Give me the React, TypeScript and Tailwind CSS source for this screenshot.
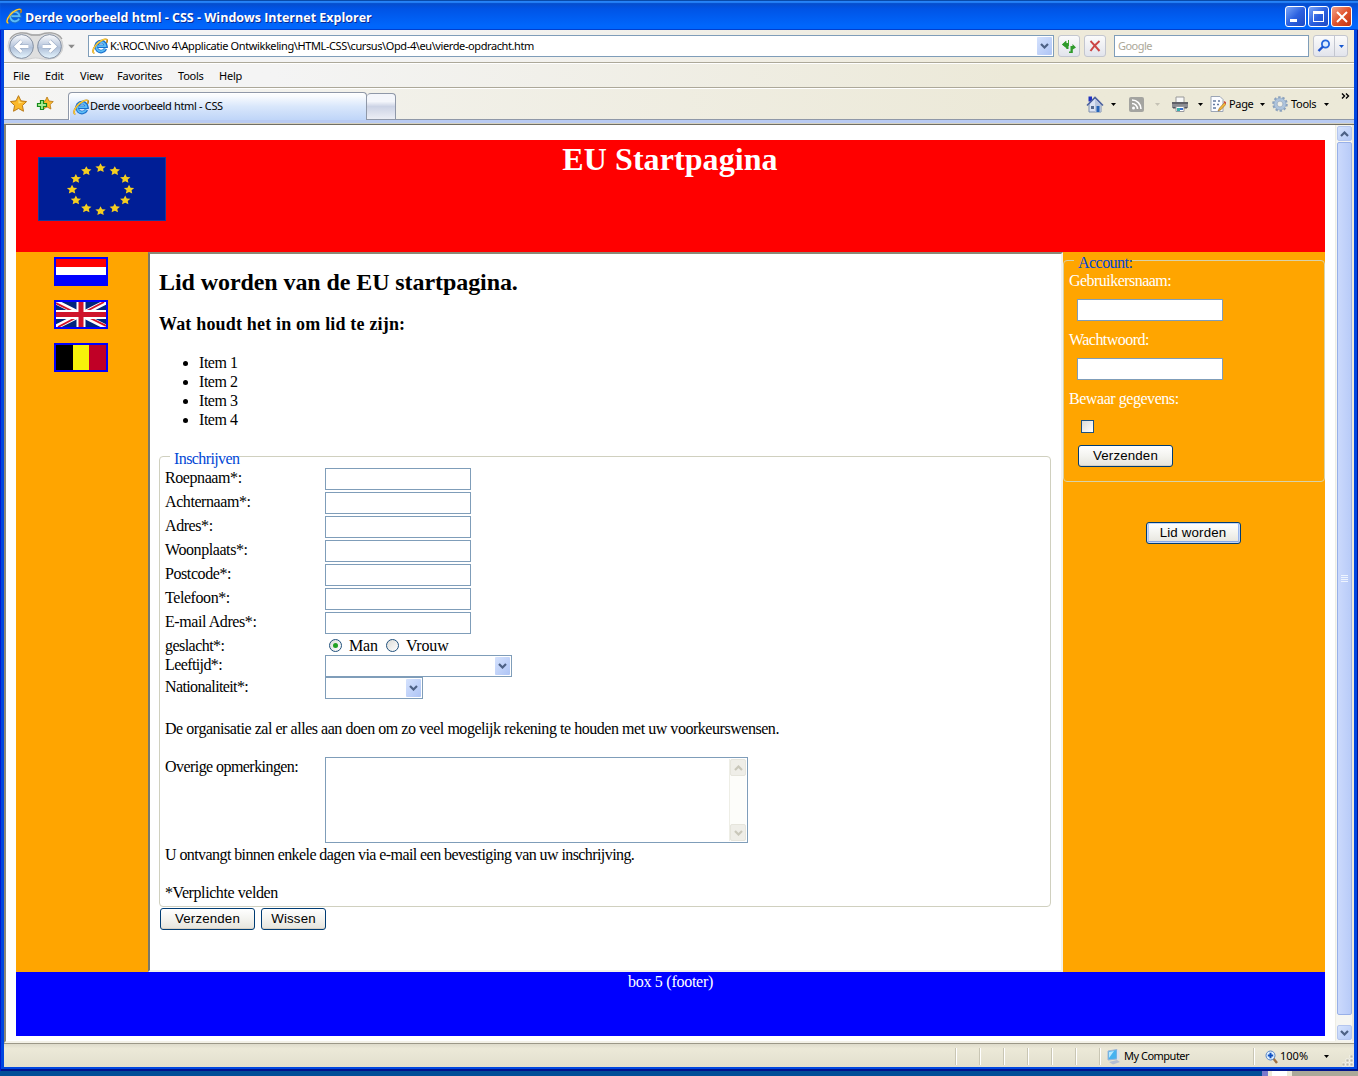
import React from "react";

const tahoma = "font-['Noto_Sans',sans-serif] text-[11px] whitespace-nowrap text-black";

function IELogo({ className = "" }: { className?: string }) {
  return (
    <svg viewBox="0 0 16 16" className={"h-4 w-4 shrink-0 " + className}>
      <path d="M13.500 10.800a5 5 0 1 1 .5-2.500H5" fill="none" stroke="#1a6fcb" strokeWidth="3.600" />
      <path d="M13.100 10.600a4.700 4.700 0 1 1 .4-2.500H5.500" fill="none" stroke="#5cbcf6" strokeWidth="1.800" />
      <path d="M2.400 15C.2 15 .6 11 4 7S12.600 .4 14.600 1.500c1 .6.700 2-.1 3.300" fill="none" stroke="#c08414" strokeWidth="1.600" />
      <path d="M2.400 15C.2 15 .6 11 4 7S12.600 .4 14.600 1.500" fill="none" stroke="#ffd23c" strokeWidth="1.100" />
    </svg>
  );
}

function Caret({ className = "" }: { className?: string }) {
  return (
    <svg viewBox="0 0 5 3" className={"h-[3px] w-[5px] shrink-0 " + className}>
      <path d="M0 0h5L2.500 3z" fill="currentColor" />
    </svg>
  );
}

function Chevron({ up = false, color = "#4d6185" }: { up?: boolean; color?: string }) {
  return (
    <svg viewBox="0 0 9 6" className="h-[6px] w-[9px]">
      <path d={up ? "M1 5l3.500-3.500L8 5" : "M1 1l3.500 3.500L8 1"} fill="none" stroke={color} strokeWidth="2.200" />
    </svg>
  );
}

function DropButton({ className = "" }: { className?: string }) {
  return (
    <div className={"flex w-[15px] items-center justify-center rounded-[1px] bg-linear-to-br from-[#d5e2fd] to-[#aec4f5] " + className}>
      <Chevron />
    </div>
  );
}

function CaptionButton({ close = false, children }: { close?: boolean; children: React.ReactNode }) {
  return (
    <div
      className={
        "flex h-[21px] w-[21px] items-center justify-center rounded-[3px] border border-white bg-linear-to-br " +
        (close ? "from-[#f0a088] via-[#e1532c] to-[#c03410]" : "from-[#7ba5f7] via-[#2c61e0] to-[#1c49c4]")
      }
    >
      {children}
    </div>
  );
}

function TitleBar() {
  return (
    <header className="flex h-[30px] items-center bg-linear-to-b from-[#0848bc] from-0% via-[#0054e6] via-30% to-[#0066fc] to-85% pr-[6px] pl-[6px] shadow-[inset_0_1px_0_#0a4aa8,inset_0_3px_1px_#2683f8,inset_0_-1px_0_#0140cf]">
      <IELogo className="mt-[2px]" />
      <span className="mt-[5px] ml-[3px] font-['Open_Sans',sans-serif] text-[12.500px] leading-4 font-bold whitespace-nowrap text-white [text-shadow:1px_1px_0_#0a2a90]">
        Derde voorbeeld html - CSS - Windows Internet Explorer
      </span>
      <div className="mt-[3px] ml-auto flex gap-[2px]">
        <CaptionButton>
          <div className="mt-2 mr-1 h-[3px] w-[7px] bg-white" />
        </CaptionButton>
        <CaptionButton>
          <div className="h-[11px] w-[11px] border border-t-[3px] border-white" />
        </CaptionButton>
        <CaptionButton close>
          <svg viewBox="0 0 12 12" className="h-3 w-3">
            <path d="M1 1l10 10M11 1L1 11" stroke="#fff" strokeWidth="2" />
          </svg>
        </CaptionButton>
      </div>
    </header>
  );
}

function NavArrows() {
  return (
    <svg viewBox="0 0 58 30" className="h-[30px] w-[58px] shrink-0">
      <defs>
        <linearGradient id="orb" x1="0" y1="0" x2="0" y2="1">
          <stop offset="0" stopColor="#fbfcfe" />
          <stop offset=".42" stopColor="#c3cfe2" />
          <stop offset=".55" stopColor="#b0c0d8" />
          <stop offset="1" stopColor="#e6f6ff" />
        </linearGradient>
      </defs>
      <path d="M14 2C22 1 24 4 28.500 4S36 1 43 2a13 13 0 0 1 0 26C36 29 33 27 28.500 27S22 29 14 28A13 13 0 0 1 14 2z" fill="#dfdfdf" stroke="#d0d0d0" />
      <path d="M3 8C8 0 19 1 24 4h9C39 1 50 0 55 8" fill="none" stroke="#a2a2a2" strokeWidth="1.300" />
      <circle cx="14.500" cy="15.500" r="11.900" fill="url(#orb)" stroke="#8590a2" />
      <circle cx="42.500" cy="15.500" r="11.900" fill="url(#orb)" stroke="#8590a2" />
      <path d="M21.500 15.500H9.500M14.500 10l-5.500 5.500 5.500 5.500" fill="none" stroke="#98a9c3" strokeWidth="4" />
      <path d="M21.500 15.500H9.500M14.500 10l-5.500 5.500 5.500 5.500" fill="none" stroke="#fff" strokeWidth="3" />
      <path d="M35.500 15.500h12M42.500 10l5.500 5.500-5.500 5.500" fill="none" stroke="#98a9c3" strokeWidth="4" />
      <path d="M35.500 15.500h12M42.500 10l5.500 5.500-5.500 5.500" fill="none" stroke="#fff" strokeWidth="3" />
    </svg>
  );
}

const toolButton = "flex h-[22px] shrink-0 items-center justify-center rounded-[3px] border border-[#c3c6cf] bg-linear-to-b from-[#fbfbfb] to-[#e2e4ec]";

function AddressRow() {
  return (
    <div className="flex h-[33px] items-center border-b border-[#aca899] bg-linear-to-r from-[#f4f4f4] from-30% to-[#eeeada] to-75% pr-[6px] pl-[3px]">
      <NavArrows />
      <Caret className="ml-1 scale-[1.400] text-[#8b8b8b]" />
      <div className="ml-[14px] flex h-[22px] w-[966px] shrink-0 items-center border border-[#7f9db9] bg-white pr-px pl-[3px]">
        <IELogo />
        <span className={tahoma + " mt-px ml-[2px] tracking-[-0.400px]"}>
          K:\ROC\Nivo 4\Applicatie Ontwikkeling\HTML-CSS\cursus\Opd-4\eu\vierde-opdracht.htm
        </span>
        <DropButton className="ml-auto h-[18px]" />
      </div>
      <div className={toolButton + " ml-1 w-[22px]"}>
        <svg viewBox="0 0 14 13" className="h-[13px] w-[14px]">
          <path d="M0 4.500L4.500 1v2H6a0 0 0 0 1 0 0V0h0l1 0v6H4.500v2z" fill="#42a838" />
          <path d="M0 4.500L4 .8v2.500h2.500V9H4.300V8z" fill="#2f9b2c" />
          <path d="M14 7.500L10.500 4v2H8.500v5.500H7V13h3.800V9.500z" fill="#2f9b2c" />
        </svg>
      </div>
      <div className={toolButton + " ml-1 w-[22px]"}>
        <svg viewBox="0 0 12 12" className="h-3 w-3">
          <path d="M1.500 1c2 2 5.500 6 9 10M10.500 1C7 4 4 7 1.500 11" stroke="#cc4545" strokeWidth="2" fill="none" />
        </svg>
      </div>
      <div className="ml-2 flex h-[22px] w-[195px] shrink-0 items-center border border-[#7f9db9] bg-white pl-[3px]">
        <span className="mt-px font-['Noto_Sans',sans-serif] text-[11px] tracking-[-0.550px] text-[#aca899]">Google</span>
      </div>
      <div className={toolButton + " ml-1 w-[35px] justify-start!"}>
        <svg viewBox="0 0 14 14" className="ml-[3px] h-[14px] w-[14px] shrink-0">
          <circle cx="8.500" cy="5" r="3.600" fill="#dcecff" stroke="#2465dc" strokeWidth="1.800" />
          <path d="M6 7.500L1.500 12" stroke="#1c53cf" strokeWidth="2.400" />
        </svg>
        <div className="ml-[3px] h-5 w-px bg-[#c3c6cf]" />
        <Caret className="ml-1 text-[#1456cf]" />
      </div>
    </div>
  );
}

const menu = [
  { label: "File", box: "w-8" },
  { label: "Edit", box: "w-[35px]" },
  { label: "View", box: "w-[37px]" },
  { label: "Favorites", box: "w-[61px]" },
  { label: "Tools", box: "w-[41px]" },
  { label: "Help", box: "w-[40px]" },
];

function MenuBar() {
  return (
    <nav className={tahoma + " flex h-[25px] items-center border-t border-b border-t-white border-b-[#aca899] bg-linear-to-r from-[#f4f4f4] from-20% to-[#ece9d8] to-75% pt-[2px] pl-[9px]"}>
      {menu.map((m) => (
        <span key={m.label} className={m.box + " tracking-[-0.220px]"}>
          {m.label}
        </span>
      ))}
    </nav>
  );
}

const starPath = "M8 .6l2.300 4.900 5.300.7-3.900 3.700 1 5.400L8 12.700l-4.700 2.600 1-5.400L.4 6.200l5.300-.7z";

function HomeIcon() {
  return (
    <svg viewBox="0 0 18 17" className="h-[17px] w-[18px]">
      <path d="M3 8l6-6 6 6v8H3z" fill="#dbe3f3" stroke="#7e8faf" />
      <path d="M9 3l5.500 5.500V16H9z" fill="#b9c6de" />
      <path d="M2.500 .5h3.500v5H2.500z" fill="#2030c0" />
      <path d="M1 9.500l8-8 8 8" fill="none" stroke="#4d62a0" strokeWidth="1.600" />
      <path d="M10.500 10h3v6h-3z" fill="#2464b8" />
      <path d="M5 10h3v3H5z" fill="#566a8c" />
    </svg>
  );
}

function FeedIcon() {
  return (
    <svg viewBox="0 0 15 15" className="h-[15px] w-[15px]">
      <rect width="15" height="15" rx="2" fill="#a4a4a0" />
      <circle cx="4.500" cy="11" r="1.500" fill="#fff" />
      <path d="M3 6.500a5.500 5.500 0 0 1 5.500 5.500M3 3a9 9 0 0 1 9 9" fill="none" stroke="#fff" strokeWidth="1.600" />
    </svg>
  );
}

function PrinterIcon() {
  return (
    <svg viewBox="0 0 18 16" className="h-4 w-[18px]">
      <path d="M5 1h8v6H5z" fill="#f8f8f8" stroke="#999" />
      <path d="M1 6h16v6H1z" fill="#8c8c92" />
      <path d="M1 6h16v2H1z" fill="#606068" />
      <path d="M2 11h14v1.500H2z" fill="#55555c" />
      <path d="M5 10.500h8v5H5z" fill="#fff" stroke="#9a9aa0" />
      <path d="M6 12h3v3H6z" fill="#38b0ae" />
      <path d="M9 12h3v2H9z" fill="#386fd0" />
    </svg>
  );
}

function PageIcon() {
  return (
    <svg viewBox="0 0 16 16" className="h-4 w-4">
      <path d="M1 .5h9l3 3v12H1z" fill="#fbfcff" stroke="#9ba5b5" />
      <path d="M3 5h3M8 5h2M3 8.500h2M7 8.500h2M3 12h3" stroke="#6379a0" strokeWidth="1.300" />
      <path d="M14.500 6.500l-5 5.500-1.500 3 3-1.300 5-5.500z" fill="#f5b83b" stroke="#94661c" strokeWidth=".6" />
      <path d="M14 5.500l2 2" stroke="#cd4a3a" strokeWidth="1.600" />
    </svg>
  );
}

function GearIcon() {
  return (
    <svg viewBox="0 0 16 16" className="h-4 w-4">
      <circle cx="8" cy="8" r="6.600" fill="none" stroke="#8ba1bd" strokeWidth="2.400" strokeDasharray="2.400 1.750" />
      <circle cx="8" cy="8" r="4.600" fill="none" stroke="#aec4dd" strokeWidth="3" />
      <circle cx="8" cy="8" r="6" fill="none" stroke="#8aa2c0" strokeWidth=".6" />
      <circle cx="8" cy="8" r="2.900" fill="#f0efe6" stroke="#7a93b5" strokeWidth=".6" />
    </svg>
  );
}

function TabRow() {
  return (
    <div className="flex h-[36px] flex-col">
      <div className="flex h-8 items-end border-t border-b border-t-white border-b-[#8f98a8] bg-linear-to-r from-[#f5f5f4] from-0% to-[#ece9d8] to-75%">
        <div className="flex h-full w-[64px] items-start gap-[9px] pt-[6px] pl-[6px]">
          <svg viewBox="0 0 16 16" className="h-[17px] w-[17px]">
            <path d={starPath} fill="#fbb829" stroke="#b77714" strokeWidth=".9" />
            <path d="M8 3l1.300 3.500 3.500.4L8 8z" fill="#ffe07a" />
          </svg>
          <svg viewBox="0 0 17 17" className="h-[17px] w-[18px]">
            <path d={starPath} transform="translate(4 1.500) scale(.82)" fill="#fbb829" stroke="#b77714" strokeWidth="1" />
            <path d="M4 5.500h3v3h3v3H7v3H4v-3H1v-3h3z" fill="#a6ee92" stroke="#158a1c" strokeWidth="1.200" />
          </svg>
        </div>
        <div className="-mb-px flex h-[28px] w-[299px] items-center rounded-t-[4px] border border-b-0 border-[#8f98a8] bg-linear-to-b from-[#fafcfe] from-10% via-[#d9e7fb] via-50% to-[#bfd5f8] pl-1 shadow-[inset_1px_1px_0_#fff]">
          <IELogo />
          <span className={tahoma + " ml-px tracking-[-0.340px]"}>Derde voorbeeld html - CSS</span>
        </div>
        <div className="h-[26px] w-[29px] rounded-t-[4px] border border-b-0 border-l-0 border-[#8f98a8] bg-linear-to-b from-[#f4f6fb] from-30% via-[#ccd3e5] via-50% to-[#eceef5]" />
        <div className={tahoma + " ml-auto flex h-full items-start"}>
          <div className="mt-[6px] flex h-[18px] items-center">
            <HomeIcon />
            <Caret className="ml-[7px]" />
            <div className="w-[13px]" />
            <FeedIcon />
            <Caret className="ml-[11px] text-[#c5c2b5]" />
            <div className="w-[11px]" />
            <PrinterIcon />
            <Caret className="ml-[9px]" />
            <div className="w-[7px]" />
            <PageIcon />
            <span className="ml-[3px] w-[25px] tracking-[-0.350px]">Page</span>
            <Caret className="ml-[6px]" />
            <div className="w-[7px]" />
            <GearIcon />
            <span className="ml-[3px] w-[26px] tracking-[-0.300px]">Tools</span>
            <Caret className="ml-[7px]" />
          </div>
          <svg viewBox="0 0 9 6" className="mt-[4px] mr-1 ml-[12px] h-[6px] w-[9px]">
            <path d="M1 .5L3.500 3 1 5.500M5 .5L7.500 3 5 5.500" fill="none" stroke="#000" strokeWidth="1.400" />
          </svg>
        </div>
      </div>
      <div className="h-1 border-b border-[#d6d2c2] bg-[#b9cbf2]" />
    </div>
  );
}

function Button({ width, focused = false, children }: { width: string; focused?: boolean; children: React.ReactNode }) {
  return (
    <button
      className={
        width +
        " flex h-[22px] items-center justify-center rounded-[3px] border border-[#003c74] bg-linear-to-b from-white via-[#f3f3ef] to-[#e6e4dc] font-['Liberation_Sans',sans-serif] text-[13.300px] leading-4 tracking-[0.150px] whitespace-nowrap text-black " +
        (focused ? "shadow-[inset_0_0_0_1px_#c4d6f8,inset_0_-2px_0_#8aa9e6,inset_2px_0_0_#b4caf4,inset_-2px_0_0_#9ab6ee]" : "shadow-[inset_0_-1px_0_#d6d0c5]")
      }
    >
      {children}
    </button>
  );
}

function Field() {
  return <input className="block h-[22px] w-[146px] shrink-0 border border-[#7f9db9] bg-white outline-none" />;
}

function Radio({ checked = false }: { checked?: boolean }) {
  return (
    <div className="flex h-[13px] w-[13px] items-center justify-center rounded-full border border-[#21517c] bg-linear-to-br from-[#dcdcd7] to-white">
      {checked && <div className="h-[5px] w-[5px] rounded-full bg-[#21a121]" />}
    </div>
  );
}

function Row({ label, height = "h-6", tracking = "", children }: { label: string; height?: string; tracking?: string; children: React.ReactNode }) {
  return (
    <div className={"flex " + height}>
      <span className={"w-40 shrink-0 whitespace-nowrap " + tracking}>{label}</span>
      {children}
    </div>
  );
}

const textFields = ["Roepnaam*:", "Achternaam*:", "Adres*:", "Woonplaats*:", "Postcode*:", "Telefoon*:", "E-mail Adres*:"];

function SignupForm() {
  return (
    <>
      <div className="h-[451px] w-[892px] rounded-[4px] border border-[#d0d0bf] pl-[5px] leading-[19px] tracking-[-0.420px]">
        <div className="-mt-[8px] ml-[5px] h-[19px] w-fit bg-white pl-1 tracking-[-0.600px] text-[#0046d5]">Inschrijven</div>
        {textFields.map((label) => (
          <Row key={label} label={label}>
            <Field />
          </Row>
        ))}
        <Row label="geslacht*:" height="h-[19px]" tracking="tracking-[-0.550px]">
          <div className="-mt-px flex h-5 items-center pl-1 tracking-[-0.150px]">
            <Radio checked />
            <span className="ml-[7px]">Man</span>
            <div className="w-2" />
            <Radio />
            <span className="ml-[7px]">Vrouw</span>
          </div>
        </Row>
        <Row label="Leeftijd*:" height="h-[22px]" tracking="tracking-[-0.600px]">
          <div className="flex h-[22px] w-[187px] justify-end border border-[#7f9db9] bg-white p-px">
            <DropButton />
          </div>
        </Row>
        <Row label="Nationaliteit*:" height="h-[22px]" tracking="tracking-[-0.620px]">
          <div className="flex h-[22px] w-[98px] justify-end border border-[#7f9db9] bg-white p-px">
            <DropButton />
          </div>
        </Row>
        <p className="mt-[20px] tracking-[-0.460px] whitespace-nowrap">
          De organisatie zal er alles aan doen om zo veel mogelijk rekening te houden met uw voorkeurswensen.
        </p>
        <div className="mt-[19px]">
          <Row label="Overige opmerkingen:" height="h-[88px]" tracking="tracking-[-0.560px]">
            <div className="flex h-[86px] w-[423px] justify-end border border-[#7f9db9] bg-white p-px">
              <div className="flex w-[17px] flex-col justify-between border-l border-[#eeeee6] bg-[#fdfdfa]">
                <div className="flex h-[17px] items-center justify-center rounded-[2px] border border-[#e6e5dc] bg-[#efeee8]">
                  <Chevron up color="#c9c7ba" />
                </div>
                <div className="flex h-[17px] items-center justify-center rounded-[2px] border border-[#e6e5dc] bg-[#efeee8]">
                  <Chevron color="#c9c7ba" />
                </div>
              </div>
            </div>
          </Row>
        </div>
        <p className="tracking-[-0.580px] whitespace-nowrap">U ontvangt binnen enkele dagen via e-mail een bevestiging van uw inschrijving.</p>
        <p className="mt-[19px]">*Verplichte velden</p>
      </div>
      <div className="mt-px flex gap-[6px] pl-px">
        <Button width="w-[95px]">Verzenden</Button>
        <Button width="w-[65px]">Wissen</Button>
      </div>
    </>
  );
}

function EuFlag() {
  const stars = Array.from({ length: 12 }, (_, i) => {
    const a = (i * Math.PI) / 6;
    return { x: 62.500 + 28.500 * Math.sin(a), y: 32 - 21.500 * Math.cos(a) };
  });
  return (
    <svg viewBox="0 0 128 64" className="h-16 w-32">
      <rect x=".5" y=".5" width="127" height="63" fill="#001e96" stroke="#173a9c" />
      {stars.map((s, i) => (
        <path key={i} transform={`translate(${s.x - 5.400} ${s.y - 4.600}) scale(.68 .6)`} d={starPath} fill="#f5ce20" />
      ))}
    </svg>
  );
}

function CountryFlags() {
  const frame = "h-[29px] w-[54px] border-2 border-[#0000ff]";
  return (
    <aside className="flex w-[132px] flex-col items-center gap-[14px] bg-[#ffa500] pt-[5px] pr-[2px]">
      <div className={frame + " flex flex-col"}>
        <div className="h-2 bg-[#ff0000]" />
        <div className="h-2 bg-white" />
        <div className="flex-1 bg-[#0000ff]" />
      </div>
      <div className={frame}>
        <svg viewBox="0 0 50 25" className="h-[25px] w-[50px]">
          <path d="M0 0h50v25H0z" fill="#00247d" />
          <path d="M0 0l50 25M50 0L0 25" stroke="#fff" strokeWidth="5" />
          <path d="M0 1.200L22 12M50 23.800L28 13M48 0L27 11M2 25l21-11" stroke="#cf142b" strokeWidth="1.900" />
          <path d="M25 0v25M0 12.500h50" stroke="#fff" strokeWidth="9" />
          <path d="M25 0v25M0 12.500h50" stroke="#cf142b" strokeWidth="5" />
        </svg>
      </div>
      <div className={frame + " grid grid-cols-3"}>
        <div className="bg-black" />
        <div className="bg-[#f7f30a]" />
        <div className="bg-[#c00026]" />
      </div>
    </aside>
  );
}

function AccountPanel() {
  return (
    <aside className="w-[262px] bg-[#ffa500] pt-[8px] text-white">
      <div className="h-[222px] rounded-[4px] border border-[#d8d2a8] pl-[5px] leading-[19px] tracking-[-0.540px]">
        <div className="-mt-[8px] ml-[5px] h-[18px] w-fit bg-[#ffa500] pl-1 text-[#0046d5]">Account:</div>
        <div className="h-7">Gebruikersnaam:</div>
        <div className="h-[31px] pl-2">
          <Field />
        </div>
        <div className="h-7">Wachtwoord:</div>
        <div className="h-[31px] pl-2">
          <Field />
        </div>
        <div className="h-[31px] tracking-[-0.450px]">Bewaar gegevens:</div>
        <div className="ml-3 h-[13px] w-[13px] border border-[#1c5180] bg-linear-to-br from-[#dcdcd7] to-white" />
        <div className="mt-3 ml-[9px]">
          <Button width="w-[95px]">Verzenden</Button>
        </div>
      </div>
      <div className="mt-10 flex justify-center pr-[2px]">
        <Button width="w-[95px]" focused>
          Lid worden
        </Button>
      </div>
    </aside>
  );
}

function WebPage() {
  return (
    <div className="flex-1 pt-[15px] pl-[10px] font-['Liberation_Serif',serif] text-[16px] leading-[19px] text-black">
      <div className="w-[1309px]">
        <div className="flex h-[112px] bg-[#ff0000]">
          <div className="w-[150px] pt-[17px] pl-[22px]">
            <EuFlag />
          </div>
          <h1 className="flex-1 pr-[151px] text-center text-[32px] leading-[38px] font-bold tracking-[0.080px] text-white">EU Startpagina</h1>
        </div>
        <div className="flex h-[720px]">
          <CountryFlags />
          <main className="w-[915px] border-2 border-t-[#8b8876] border-r-[#f4f2ea] border-b-[#f4f2ea] border-l-[#7b7868] bg-white pl-[9px]">
            <h2 className="mt-[14px] text-[24px] leading-[29px] font-bold tracking-[-0.080px] whitespace-nowrap">Lid worden van de EU startpagina.</h2>
            <h3 className="mt-[16px] text-[18px] leading-[22px] font-bold tracking-[0.180px] whitespace-nowrap">Wat houdt het in om lid te zijn:</h3>
            <ul className="mt-[18px] mb-[27px] list-disc pl-10 tracking-[-0.450px]">
              <li>Item 1</li>
              <li>Item 2</li>
              <li>Item 3</li>
              <li>Item 4</li>
            </ul>
            <SignupForm />
          </main>
          <AccountPanel />
        </div>
        <footer className="h-16 bg-[#0000ff] text-center tracking-[-0.270px] text-white">box 5 (footer)</footer>
      </div>
    </div>
  );
}

function ScrollBar() {
  const box = "flex h-[15px] w-[15px] items-center justify-center rounded-[2px] border border-[#b5c6ee] bg-linear-to-br from-[#d6e3fd] to-[#b4c9f7]";
  return (
    <div className="flex w-[17px] flex-col items-center border-l border-[#eeede5] bg-[#f6f6f2] py-px">
      <div className={box}>
        <Chevron up />
      </div>
      <div className="mt-px flex h-[873px] w-[15px] flex-col items-center justify-center gap-px rounded-[2px] border border-[#98b0e8] bg-linear-to-r from-[#cbd9fc] to-[#b8cbf8]">
        <div className="h-px w-[7px] bg-[#eef4fe]" />
        <div className="h-px w-[7px] bg-[#eef4fe]" />
        <div className="h-px w-[7px] bg-[#eef4fe]" />
        <div className="h-px w-[7px] bg-[#eef4fe]" />
      </div>
      <div className={box + " mt-auto"}>
        <Chevron />
      </div>
    </div>
  );
}

function StatusBar() {
  const pane = "h-[17px] border-l border-[#c9c6b4] shadow-[inset_1px_0_0_#fff]";
  return (
    <div className={tahoma + " flex h-[24px] items-center border-t border-[#9c9888] bg-linear-to-b from-[#dedbcb] via-[#ece9d8] via-20% to-[#e2dfcd] pt-[2px]"}>
      <div className="w-[951px]" />
      <div className={pane + " w-6"} />
      <div className={pane + " w-6"} />
      <div className={pane + " w-6"} />
      <div className={pane + " w-6"} />
      <div className={pane + " w-6"} />
      <div className={pane + " w-6"} />
      <div className={pane + " flex w-[154px] items-center pl-[7px]"}>
        <svg viewBox="0 0 14 16" className="h-4 w-[14px] shrink-0">
          <path d="M1 2l9-1.500V10l-9 1z" fill="#46b2ef" stroke="#9eb5d6" />
          <path d="M2 3l5-1-5 7z" fill="#b8e8ff" />
          <path d="M10 .5l2.500 1V10L10 11z" fill="#d8e1ef" />
          <path d="M2 13l8-2 3 2-7 2.500z" fill="#b3bed2" />
        </svg>
        <span className="ml-[3px] tracking-[-0.500px]">My Computer</span>
      </div>
      <div className={pane + " flex flex-1 items-center pl-[11px]"}>
        <svg viewBox="0 0 13 14" className="h-[14px] w-[13px]">
          <path d="M8 8l4 5" stroke="#a07040" strokeWidth="2.400" />
          <circle cx="5.500" cy="5.500" r="4.500" fill="#dff0ff" stroke="#5a86c4" />
          <path d="M5.500 2.800v5.400M2.800 5.500h5.400" stroke="#1050c0" strokeWidth="2" />
        </svg>
        <span className="ml-[2px]">100%</span>
        <Caret className="ml-4" />
        <svg viewBox="0 0 12 12" className="mt-2 ml-auto h-3 w-3">
          <path d="M8 0h3v3H8zM4 4h3v3H4zM8 4h3v3H8zM0 8h3v3H0zM4 8h3v3H4zM8 8h3v3H8z" fill="#bbb8a7" stroke="#fff" strokeWidth=".6" />
        </svg>
      </div>
    </div>
  );
}

export default function App() {
  return (
    <div className="h-[1076px] w-[1358px] overflow-hidden bg-[#004e98]">
      <div className="flex h-[1071px] flex-col rounded-t-[6px] bg-[#0046e0] shadow-[inset_1px_0_0_#0019cf,inset_-1px_0_0_#00138c,inset_0_-2px_0_#00138c]">
        <TitleBar />
        <div className="mx-1 flex h-[1037px] flex-col bg-[#ece9d8]">
          <AddressRow />
          <MenuBar />
          <TabRow />
          <div className="flex h-[919px] border-t border-b-2 border-l-2 border-t-[#716f64] border-b-[#f4f2e8] border-l-[#8a8778] bg-white">
            <WebPage />
            <ScrollBar />
            <div className="w-[2px] bg-[#ece9d8]" />
          </div>
          <StatusBar />
        </div>
      </div>
      <div className="flex h-[5px] pl-[1262px]">
        <div className="w-[6px] bg-[#7a78cc]" />
        <div className="w-1 bg-[#ece9d8]" />
        <div className="w-[15px] bg-white" />
        <div className="w-[5px] bg-[#ece9d8]" />
        <div className="flex-1 bg-[#aca899]" />
      </div>
    </div>
  );
}
